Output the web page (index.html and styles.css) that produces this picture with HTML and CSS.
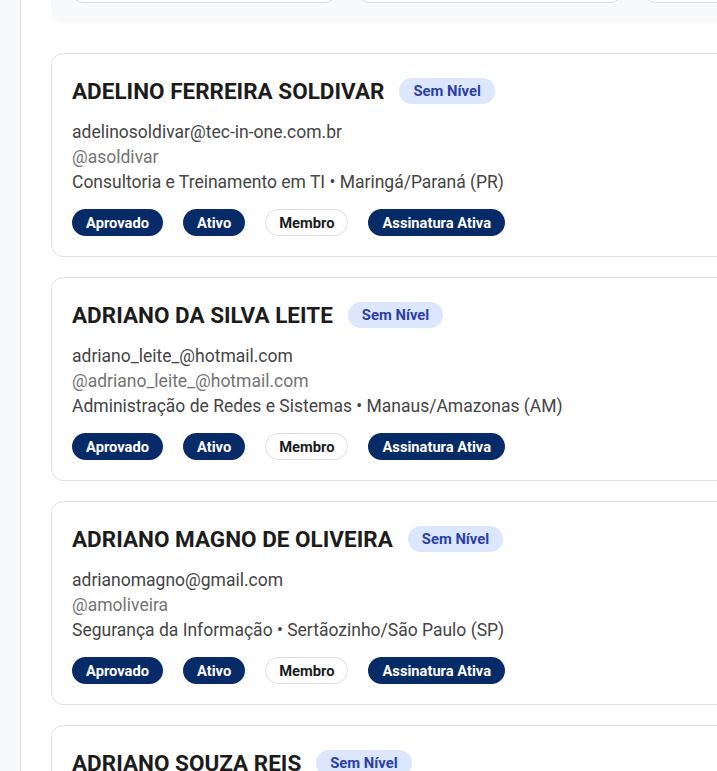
FILE: index.html
```html
<!DOCTYPE html>
<html lang="pt-BR">
<head>
<meta charset="utf-8">
<title>Membros</title>
<link rel="stylesheet" href="styles.css">
</head>
<body>
<div class="layout">
  <aside class="sidebar"></aside>
  <main class="main">
    <section class="filters">
      <div class="filter-box"></div>
      <div class="filter-box"></div>
      <div class="filter-box"></div>
    </section>

    <article class="card">
      <header class="card-head">
        <h2 class="name">ADELINO FERREIRA SOLDIVAR</h2>
        <span class="level">Sem Nível</span>
      </header>
      <div class="info">
        <div class="email">adelinosoldivar@tec-in-one.com.br</div>
        <div class="handle">@asoldivar</div>
        <div class="place">Consultoria e Treinamento em TI • Maringá/Paraná (PR)</div>
      </div>
      <div class="tags">
        <span class="tag">Aprovado</span>
        <span class="tag">Ativo</span>
        <span class="tag tag-light">Membro</span>
        <span class="tag">Assinatura Ativa</span>
      </div>
    </article>

    <article class="card">
      <header class="card-head">
        <h2 class="name">ADRIANO DA SILVA LEITE</h2>
        <span class="level">Sem Nível</span>
      </header>
      <div class="info">
        <div class="email">adriano_leite_@hotmail.com</div>
        <div class="handle">@adriano_leite_@hotmail.com</div>
        <div class="place">Administração de Redes e Sistemas • Manaus/Amazonas (AM)</div>
      </div>
      <div class="tags">
        <span class="tag">Aprovado</span>
        <span class="tag">Ativo</span>
        <span class="tag tag-light">Membro</span>
        <span class="tag">Assinatura Ativa</span>
      </div>
    </article>

    <article class="card">
      <header class="card-head">
        <h2 class="name">ADRIANO MAGNO DE OLIVEIRA</h2>
        <span class="level">Sem Nível</span>
      </header>
      <div class="info">
        <div class="email">adrianomagno@gmail.com</div>
        <div class="handle">@amoliveira</div>
        <div class="place">Segurança da Informação • Sertãozinho/São Paulo (SP)</div>
      </div>
      <div class="tags">
        <span class="tag">Aprovado</span>
        <span class="tag">Ativo</span>
        <span class="tag tag-light">Membro</span>
        <span class="tag">Assinatura Ativa</span>
      </div>
    </article>

    <article class="card">
      <header class="card-head">
        <h2 class="name">ADRIANO SOUZA REIS</h2>
        <span class="level">Sem Nível</span>
      </header>
      <div class="info">
        <div class="email">adrianosouzareis@gmail.com</div>
        <div class="handle">@asreis</div>
        <div class="place">Infraestrutura de TI • Salvador/Bahia (BA)</div>
      </div>
      <div class="tags">
        <span class="tag">Aprovado</span>
        <span class="tag">Ativo</span>
        <span class="tag tag-light">Membro</span>
        <span class="tag">Assinatura Ativa</span>
      </div>
    </article>
  </main>
</div>
</body>
</html>
```

FILE: styles.css
```css
html, body {
  margin: 0;
  padding: 0;
  background: #ffffff;
  overflow: hidden;
  height: 771px;
}

body {
  font-family: Roboto, "Noto Sans", "Liberation Sans", sans-serif;
  color: #222;
}

.layout {
  display: flex;
  width: 780px;
  min-height: 771px;
}

.sidebar {
  width: 20px;
  flex: 0 0 20px;
  background: #f8f9fb;
  border-right: 1px solid #dedfe2;
  min-height: 771px;
}

.main {
  flex: 1;
  padding-left: 30px;
  display: flex;
  flex-direction: column;
  gap: 20px;
}

.filters {
  margin-top: -77px;
  margin-bottom: 10px;
  height: 100px;
  box-sizing: border-box;
  background: #f8f9fa;
  border-radius: 12px;
  padding: 20px 22px 20px 22px;
  display: flex;
  gap: 24px;
  align-items: flex-end;
}

.filter-box {
  width: 262px;
  flex: 0 0 262px;
  height: 40px;
  box-sizing: border-box;
  background: #ffffff;
  border: 1px solid #dcdde0;
  border-radius: 10px;
}

.card {
  border: 1px solid #e1e2e4;
  border-radius: 12px;
  padding: 20px 20px 20px 20px;
  background: #fff;
  height: 204px;
  box-sizing: border-box;
}

.card-head {
  display: flex;
  align-items: center;
  gap: 15px;
  height: 34px;
  margin-bottom: 12px;
}

.name {
  margin: 0;
  font-size: 22.5px;
  font-weight: 700;
  color: #1c1c1c;
  line-height: 34px;
}

.level {
  display: inline-flex;
  align-items: center;
  height: 26px;
  padding: 0 14px;
  border-radius: 13px;
  background: #dce7fd;
  color: #2b3fa6;
  font-size: 14.8px;
  font-weight: 700;
}

.info {
  font-size: 17.5px;
  line-height: 25px;
}

.email {
  color: #444444;
}

.handle {
  color: #737373;
}

.place {
  color: #444444;
}

.tags {
  display: flex;
  gap: 20px;
  margin-top: 14px;
}

.tag {
  display: inline-flex;
  align-items: center;
  height: 27px;
  box-sizing: border-box;
  padding: 0 14px;
  border-radius: 14px;
  background: #062b66;
  color: #ffffff;
  font-size: 14.7px;
  font-weight: 700;
}

.tag-light {
  background: #ffffff;
  color: #1c1c1c;
  border: 1px solid #dcdcdc;
  padding: 0 13px;
}
```
